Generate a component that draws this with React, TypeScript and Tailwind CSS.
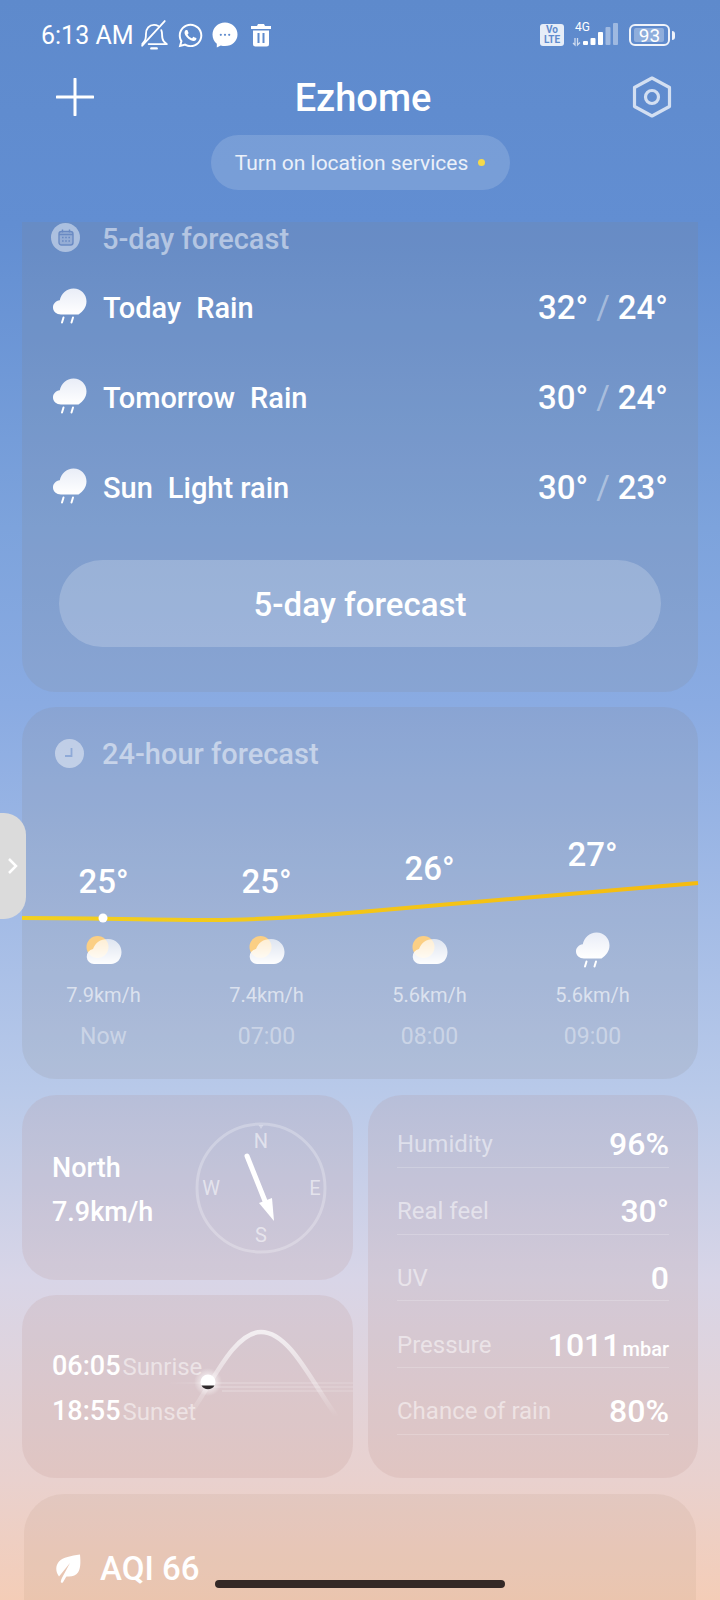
import { FaWhatsapp } from "react-icons/fa";

const daily = [
  { day: "Today", desc: "Rain", hi: "32°", lo: "24°" },
  { day: "Tomorrow", desc: "Rain", hi: "30°", lo: "24°" },
  { day: "Sun", desc: "Light rain", hi: "30°", lo: "23°" },
];

const hourly = [
  { temp: "25°", lift: "pb-[24px]", icon: "cloud", wind: "7.9km/h", time: "Now" },
  { temp: "25°", lift: "pb-[24px]", icon: "cloud", wind: "7.4km/h", time: "07:00" },
  { temp: "26°", lift: "pb-[37px]", icon: "cloud", wind: "5.6km/h", time: "08:00" },
  { temp: "27°", lift: "pb-[51px]", icon: "rain", wind: "5.6km/h", time: "09:00" },
];

const details = [
  { label: "Humidity", value: "96%" },
  { label: "Real feel", value: "30°" },
  { label: "UV", value: "0" },
  { label: "Pressure", value: "1011", unit: "mbar" },
  { label: "Chance of rain", value: "80%" },
];

const cardTint = "bg-[#b0827a]/[0.14]";
const blueCardTint = "bg-[#8a8078]/[0.14]";

function RainIcon() {
  return (
    <svg width="36" height="36" viewBox="0 0 36 36" className="shrink-0">
      <defs>
        <linearGradient id="rainFill" x1="0" y1="0" x2="0" y2="1">
          <stop offset="0" stopColor="#e9edf7" />
          <stop offset="1" stopColor="#ffffff" />
        </linearGradient>
      </defs>
      <path
        d="M9 26.5C4.5 26.5 1 23.5 1 19.5C1 15.8 3.8 12.9 7.8 12.3C9 6 14.5 .5 21.5 .5C29 .5 34.5 6.3 34.5 13.3C34.5 19.5 31 23.5 26.5 26.5Z"
        fill="url(#rainFill)"
      />
      <path d="M11.5 29.5 10 34.5M21 29.5 19.5 34.5" stroke="#fff" strokeWidth="2" strokeLinecap="round" />
    </svg>
  );
}

function PartlyCloudyIcon() {
  return (
    <svg width="36" height="30" viewBox="0 0 36 30" className="shrink-0">
      <defs>
        <linearGradient id="cloudFill" x1="0" y1="0" x2="0" y2="1">
          <stop offset="0" stopColor="#fff" stopOpacity="0.65" />
          <stop offset="1" stopColor="#fff" stopOpacity="0.98" />
        </linearGradient>
      </defs>
      <circle cx="11.5" cy="12" r="11" fill="#fbcf84" />
      <path
        d="M8 29A7.5 7.5 0 0 1 7 14.1C9 8 14 4 22 4C30 4 35.5 10 35.5 17C35.5 24 31 29 25 29Z"
        fill="url(#cloudFill)"
      />
    </svg>
  );
}

function BellSlash() {
  return (
    <svg width="30" height="30" viewBox="0 0 28 28" fill="none" stroke="#fff" strokeWidth="1.7" strokeLinecap="round" strokeLinejoin="round">
      <path d="M3 22.5 5 20c1.5-2 1.5-4 1.5-7C6.5 8 9.5 4.5 14 4.5c1.5 0 2.8.4 3.9 1.1" />
      <path d="M20.8 9.5c.5 1.2.7 2.5.7 3.8 0 3 .2 5 1.7 6.8L26 22.5H9" />
      <path d="M24 1 3 24" />
      <path d="M11.5 26.5h5" strokeWidth="2.2" />
    </svg>
  );
}

function ChatBubble() {
  return (
    <svg width="26" height="26" viewBox="0 0 26 26">
      <path d="M13 .5C6 .5.5 5.8.5 12.5c0 3.8 1.6 7 4.3 9.3V25.5l4-2c1.3.4 2.7.6 4.2.6 7 0 12.5-5 12.5-11.6S20 .5 13 .5z" fill="#fff" />
      <circle cx="8.8" cy="12.8" r="1.1" fill="#5f8bcd" />
      <circle cx="13" cy="12.8" r="1.1" fill="#5f8bcd" />
      <circle cx="17.2" cy="12.8" r="1.1" fill="#5f8bcd" />
    </svg>
  );
}

function TrashIcon() {
  return (
    <svg width="20" height="24" viewBox="0 0 20 24">
      <path d="M7 1h6l1 2h6v3H0V3h6z" fill="#fff" />
      <path d="M2 7.5h16V21a2.5 2.5 0 0 1-2.5 2.5h-11A2.5 2.5 0 0 1 2 21z" fill="#fff" />
      <rect x="6.5" y="10" width="2" height="10" fill="#5f8bcd" />
      <rect x="11.5" y="10" width="2" height="10" fill="#5f8bcd" />
    </svg>
  );
}

function SignalIcon() {
  return (
    <svg width="48" height="24" viewBox="0 0 48 24" fill="#fff">
      <path d="M3 15v7L1 20M5.5 15v7l2.5-2.5" stroke="#fff" strokeWidth="1.3" fill="none" opacity="0.7" />
      <rect x="11" y="18" width="5" height="4" rx="1" />
      <rect x="18.5" y="15" width="5" height="7" rx="1" />
      <rect x="26" y="9" width="5" height="13" rx="1" />
      <rect x="33.5" y="4" width="5" height="18" rx="1" fill="#fff" fillOpacity="0.4" />
      <rect x="41" y="0" width="5" height="22" rx="1" fill="#fff" fillOpacity="0.4" />
    </svg>
  );
}

function StatusBar() {
  return (
    <div className="flex h-[70px] items-center justify-between pl-[41px] pr-[45px] text-white">
      <div className="flex items-center">
        <span className="text-[25px] leading-none">6:13 AM</span>
        <span className="ml-[5px] flex items-center"><BellSlash /></span>
        <FaWhatsapp className="ml-[8px] text-[27px]" />
        <span className="ml-[8px] flex items-center"><ChatBubble /></span>
        <span className="ml-[13px] flex items-center"><TrashIcon /></span>
      </div>
      <div className="flex items-center">
        <div className="flex h-[22px] w-[24px] flex-col items-center justify-center rounded-[3px] bg-white/85 text-[10px] font-bold leading-[10px] text-[#5f8bcd]">
          <span>Vo</span>
          <span>LTE</span>
        </div>
        <div className="relative ml-[8px] h-[24px] w-[48px]">
          <SignalIcon />
          <span className="absolute left-[3px] top-[-2px] text-[12px] leading-none">4G</span>
        </div>
        <div className="ml-[9px] flex items-center">
          <div className="relative flex h-[22px] w-[41px] items-center justify-center rounded-[6px] border-[2.5px] border-white/90">
            <div className="absolute inset-y-[2px] left-[3px] w-[30px] rounded-[2px] bg-white/30" />
            <span className="relative text-[19px] leading-none">93</span>
          </div>
          <div className="ml-[2px] h-[9px] w-[3px] rounded-r-sm bg-white/90" />
        </div>
      </div>
    </div>
  );
}

function Header() {
  return (
    <div className="flex h-[54px] items-center justify-between pl-[56px] pr-[48px] text-white">
      <svg width="38" height="38" viewBox="0 0 38 38" stroke="#fff" strokeWidth="3" strokeLinecap="round">
        <path d="M19 1v36M1 19h36" />
      </svg>
      <h1 className="pt-[1px] text-[38px] font-medium leading-none">Ezhome</h1>
      <svg width="40" height="42" viewBox="0 0 40 42" fill="none" stroke="#fff" strokeOpacity="0.72" strokeWidth="3.2" strokeLinejoin="round">
        <path d="M20 2 37.5 11.5v19L20 40 2.500 30.5v-19z" />
        <circle cx="20" cy="21" r="6.5" />
      </svg>
    </div>
  );
}

function DailyCard() {
  return (
    <section className={`mx-[22px] mt-[32px] rounded-b-[34px] pb-[45px] ${blueCardTint}`}>
      <div className="flex h-[30px] items-center pl-[29px]">
        <div className="flex h-[29px] w-[29px] items-center justify-center rounded-full bg-white/45">
          <svg width="16" height="17" viewBox="0 0 16 17" fill="none" stroke="#6a8ac3" strokeWidth="1.4">
            <rect x="1" y="2.5" width="14" height="13.5" rx="2.5" fill="#6a8ac3" fillOpacity="0.35" />
            <path d="M4.5 .5v3M11.5 .5v3M1 5.5h14" />
            <path d="M4 8.5h8M4 12h8" strokeDasharray="1.6 1.6" />
          </svg>
        </div>
        <span className="ml-[22px] mt-[4px] text-[29px] font-medium leading-none text-white/50">5-day forecast</span>
      </div>
      <div className="mt-[10px]">
        {daily.map((row) => (
          <div key={row.day} className="flex h-[90px] items-center pl-[30px] pr-[30px] pt-[2px] text-white">
            <div className="mb-[4px] flex"><RainIcon /></div>
            <span className="ml-[15px] text-[29px] font-medium leading-none">{row.day}</span>
            <span className="ml-[15px] text-[29px] font-medium leading-none">{row.desc}</span>
            <div className="mb-[2px] ml-auto flex items-center text-[33px] font-medium leading-none">
              <span>{row.hi}</span>
              <span className="mx-[8px] font-normal text-white/40">/</span>
              <span>{row.lo}</span>
            </div>
          </div>
        ))}
      </div>
      <div className="mx-[37px] mt-[28px] flex h-[87px] items-center justify-center rounded-[44px] bg-white/20 pt-[2px] text-[33px] font-medium text-white">
        5-day forecast
      </div>
    </section>
  );
}

function HourlyCard() {
  return (
    <section className={`relative mx-[22px] mt-[15px] rounded-[34px] ${blueCardTint}`}>
      <div className="flex h-[61px] items-end pl-[33px]">
        <div className="flex h-[29px] w-[29px] items-center justify-center rounded-full bg-white/45">
          <svg width="16" height="16" viewBox="0 0 16 16" fill="none" stroke="#8faad8" strokeWidth="1.8">
            <path d="M9.5 2v8H3" />
          </svg>
        </div>
        <span className="mb-[-1px] ml-[18px] text-[29px] font-medium leading-[29px] text-white/50">24-hour forecast</span>
      </div>
      <div className="grid grid-cols-[repeat(4,163px)]">
        {hourly.map((h) => (
          <div key={h.time} className="flex flex-col items-center">
            <div className={`flex h-[157px] items-end ${h.lift}`}>
              <span className="text-[33px] font-medium leading-[38px] text-white">{h.temp}</span>
            </div>
            <div className="flex h-[50px] items-center justify-center">
              {h.icon === "rain" ? <RainIcon /> : <PartlyCloudyIcon />}
            </div>
            <span className="mt-[6px] text-[20px] leading-[28px] text-white/60">{h.wind}</span>
            <span className="mt-[13px] text-[23px] leading-[30px] text-white/40">{h.time}</span>
          </div>
        ))}
      </div>
      <div className="h-[27px]" />
      <svg className="absolute left-0 top-[170px] overflow-visible" width="676" height="50" viewBox="0 0 676 50" fill="none">
        <defs>
          <linearGradient id="lineFill" x1="0" y1="0" x2="1" y2="0">
            <stop offset="0" stopColor="#f2d020" />
            <stop offset="1" stopColor="#f5bb10" />
          </linearGradient>
        </defs>
        <path d="M0 41C80 41 140 43 190 43C230 43 280 40 338 35C450 25 560 16 676 6" stroke="url(#lineFill)" strokeWidth="4" />
        <circle cx="81" cy="41" r="4.5" fill="#fff" />
      </svg>
    </section>
  );
}

function WindCard() {
  return (
    <div className={`flex h-[185px] items-center justify-between rounded-[34px] pl-[30px] pr-[24px] ${cardTint}`}>
      <div className="pt-[4px] text-[27px] font-medium leading-[44px] text-white">
        <div>North</div>
        <div>7.9km/h</div>
      </div>
      <svg width="136" height="136" viewBox="0 0 136 136" fill="none">
        <circle cx="68" cy="68" r="64" stroke="#fff" strokeOpacity="0.25" strokeWidth="3" />
        <path d="M65.5 5h5L68 9z" fill="#fff" fillOpacity="0.3" />
        <g fill="#fff" fillOpacity="0.55" fontSize="20" fontFamily="Roboto, sans-serif" textAnchor="middle">
          <text x="68" y="28">N</text>
          <text x="68" y="122">S</text>
          <text x="18" y="75">W</text>
          <text x="122" y="75">E</text>
        </g>
        <path d="M54 36 72 81" stroke="#fff" strokeWidth="5" strokeLinecap="round" />
        <path d="M66 83 79 78 81 101z" fill="#fff" />
      </svg>
    </div>
  );
}

function SunCard() {
  return (
    <div className={`relative mt-[15px] flex h-[183px] flex-col justify-center rounded-[34px] pl-[30px] pt-[5px] ${cardTint}`}>
      <div className="flex items-baseline leading-[44px] text-white">
        <span className="text-[27px] font-medium">06:05</span>
        <span className="ml-[2px] text-[24px] text-white/50">Sunrise</span>
      </div>
      <div className="flex items-baseline leading-[44px] text-white">
        <span className="text-[27px] font-medium">18:55</span>
        <span className="ml-[2px] text-[24px] text-white/50">Sunset</span>
      </div>
      <svg className="absolute inset-0" width="331" height="183" viewBox="0 0 331 183" fill="none">
        <defs>
          <linearGradient id="arc" x1="0" y1="0" x2="0" y2="1">
            <stop offset="0" stopColor="#fff" stopOpacity="0.7" />
            <stop offset="0.6" stopColor="#fff" stopOpacity="0.35" />
            <stop offset="1" stopColor="#fff" stopOpacity="0" />
          </linearGradient>
          <linearGradient id="horizon" x1="0" y1="0" x2="1" y2="0">
            <stop offset="0" stopColor="#fff" stopOpacity="0" />
            <stop offset="0.3" stopColor="#fff" stopOpacity="0.35" />
            <stop offset="1" stopColor="#fff" stopOpacity="0.22" />
          </linearGradient>
          <radialGradient id="glow">
            <stop offset="0.5" stopColor="#fff" stopOpacity="0.5" />
            <stop offset="1" stopColor="#fff" stopOpacity="0" />
          </radialGradient>
        </defs>
        <path d="M171 115C190 88 212 37 239 37C268 37 290 88 315 122" stroke="url(#arc)" strokeWidth="4.5" />
        <path d="M145 88H331M185 92H331M200 96H331" stroke="url(#horizon)" strokeWidth="1" />
        <circle cx="186" cy="87" r="14" fill="url(#glow)" />
        <circle cx="186" cy="87" r="7.5" fill="#fff" />
        <path d="M179.5 90.5h13a7.5 7.5 0 0 1-13 0z" fill="#2f2a2c" />
      </svg>
    </div>
  );
}

function DetailsCard() {
  return (
    <div className={`h-[383px] w-[330px] rounded-[34px] px-[29px] pt-[6px] ${cardTint}`}>
      {details.map((d) => (
        <div key={d.label} className="flex h-[66.75px] items-center justify-between border-b border-white/20 pt-[21px]">
          <span className="text-[24px] text-white/50">{d.label}</span>
          <span className="flex items-baseline text-[32px] font-medium text-white">
            {d.value}
            {d.unit && <span className="ml-[2px] text-[20px]">{d.unit}</span>}
          </span>
        </div>
      ))}
    </div>
  );
}

function AqiCard() {
  return (
    <section className="mx-[24px] mt-[16px] h-[200px] rounded-t-[40px] bg-[#b08a70]/[0.12]">
      <div className="flex items-center pl-[31px] pt-[58px] text-white">
        <svg width="26" height="30" viewBox="0 0 26 30" fill="#fff">
          <path d="M25 .5c.8 8.5.6 14-2 18-2.2 3.2-5.5 4.3-10.5 4-.8 0-1 0-1.3.3l-3.2 5.5c-.6 1-2.3.6-2.2-.6.1-1.3.7-2.7 1.4-4.1L15 9 4 22.5C.5 17.5.3 11.8 4 7.5 8 3 16 2 25 .5z" />
        </svg>
        <span className="ml-[19px] text-[33px] font-medium leading-none">AQI 66</span>
      </div>
    </section>
  );
}

export default function App() {
  return (
    <div className="relative h-[1600px] w-[720px] overflow-hidden bg-[linear-gradient(180deg,#5e8acc_0%,#628ed2_14%,#7da3dc_33%,#8aabe2_44%,#b8c9e9_68%,#d8d5e7_80%,#e9d1ce_92.5%,#f4cdb7_100%)] font-['Roboto',sans-serif]">
      <StatusBar />
      <Header />
      <div className="mt-[11px] flex justify-center">
        <div className="flex h-[55px] w-[299px] items-center justify-center rounded-[28px] bg-white/15 pt-[3px] text-[21px] text-white/85">
          Turn on location services
          <span className="ml-[10px] mb-[3px] h-[7px] w-[7px] rounded-full bg-[#f5d94a]" />
        </div>
      </div>
      <DailyCard />
      <HourlyCard />
      <div className="mx-[22px] mt-[16px] flex justify-between">
        <div className="w-[331px]">
          <WindCard />
          <SunCard />
        </div>
        <DetailsCard />
      </div>
      <AqiCard />
      {/* side tab */}
      <div className="absolute left-0 top-[813px] flex h-[106px] w-[26px] items-center justify-center rounded-r-[22px] bg-[#dbdbdb]">
        <svg width="12" height="18" viewBox="0 0 12 18" fill="none" stroke="#fff" strokeWidth="2.5">
          <path d="M2 2l7 7-7 7" />
        </svg>
      </div>
      {/* home indicator */}
      <div className="absolute left-[215px] top-[1580px] h-[8px] w-[290px] rounded-full bg-[#332826]" />
    </div>
  );
}
